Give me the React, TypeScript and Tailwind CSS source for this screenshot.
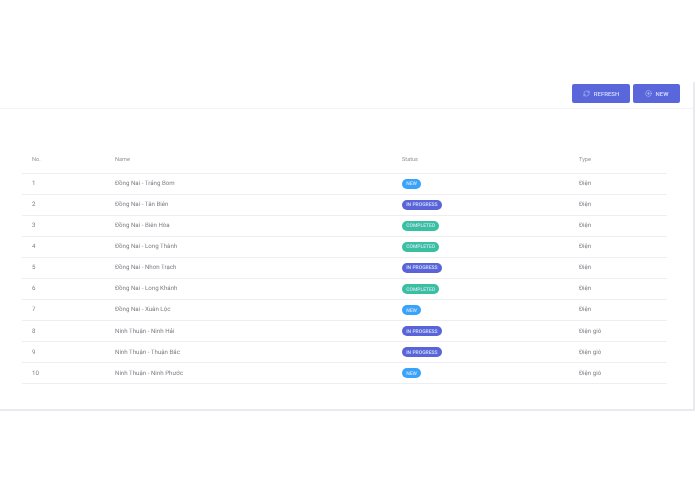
import { RefreshCw, PlusCircle } from "lucide-react";

const rows = [
  ["1", "Đồng Nai - Trảng Bom", "NEW", "Điện"],
  ["2", "Đồng Nai - Tân Biên", "IN PROGRESS", "Điện"],
  ["3", "Đồng Nai - Biên Hòa", "COMPLETED", "Điện"],
  ["4", "Đồng Nai - Long Thành", "COMPLETED", "Điện"],
  ["5", "Đồng Nai - Nhơn Trạch", "IN PROGRESS", "Điện"],
  ["6", "Đồng Nai - Long Khánh", "COMPLETED", "Điện"],
  ["7", "Đồng Nai - Xuân Lộc", "NEW", "Điện"],
  ["8", "Ninh Thuận - Ninh Hải", "IN PROGRESS", "Điện gió"],
  ["9", "Ninh Thuận - Thuận Bắc", "IN PROGRESS", "Điện gió"],
  ["10", "Ninh Thuận - Ninh Phước", "NEW", "Điện gió"],
];

function Badge({ s }: { s: string }) {
  const color =
    s === "NEW" ? "bg-[#38a3fa]" : s === "COMPLETED" ? "bg-[#38c09f]" : "bg-[#5a64d8]";
  return (
    <span className={`block h-[10px] w-fit rounded-full px-[4.2px] pt-[0.5px] text-[5px] font-medium leading-[10px] text-[#cfe0fa] ${color}`}>
      {s}
    </span>
  );
}

export default function App() {
  return (
    <div className="h-[494px] w-[695px] overflow-hidden pt-[82px] font-['Roboto',sans-serif] [text-rendering:geometricPrecision] [will-change:transform]">
      <div className="h-[329px] w-[695px] border-r-2 border-b-2 border-[#e9e9f0]">
        <div className="flex h-[27px] items-start justify-end gap-[3px] border-b border-[#f3f3f6] pt-[2px] pr-[13px]">
          <button className="flex h-[19px] w-[58px] items-center justify-center gap-[4px] rounded-[2px] bg-[#5a67da] text-[6px] font-medium text-[#d6dcff]">
            <RefreshCw size={7} strokeWidth={1.5} />
            REFRESH
          </button>
          <button className="flex h-[19px] w-[47px] items-center justify-center gap-[4px] rounded-[2px] bg-[#5a67da] text-[6px] font-medium text-[#d6dcff]">
            <PlusCircle size={7} strokeWidth={1.5} />
            NEW
          </button>
        </div>
        <div className="pl-[22px] pr-[26px] pt-[40px]">
          <table className="w-full table-fixed border-collapse text-[6.15px] text-[#7c8086]">
            <colgroup>
              <col className="w-[93px]" />
              <col className="w-[287px]" />
              <col className="w-[177px]" />
              <col />
            </colgroup>
            <thead>
              <tr className="h-[24px] border-b border-[#eeeef1] text-left text-[5.6px] text-[#92969c]">
                <th className="pb-[2px] pl-[10px] font-normal">No.</th>
                <th className="pb-[2px] font-normal">Name</th>
                <th className="pb-[2px] font-normal">Status</th>
                <th className="pb-[2px] font-normal">Type</th>
              </tr>
            </thead>
            <tbody>
              {rows.map((r) => (
                <tr key={r[0]} className="h-[21.1px] border-b border-[#eeeef1]">
                  <td className="pl-[10px]">{r[0]}</td>
                  <td>{r[1]}</td>
                  <td>
                    <Badge s={r[2]} />
                  </td>
                  <td>{r[3]}</td>
                </tr>
              ))}
            </tbody>
          </table>
        </div>
      </div>
    </div>
  );
}
